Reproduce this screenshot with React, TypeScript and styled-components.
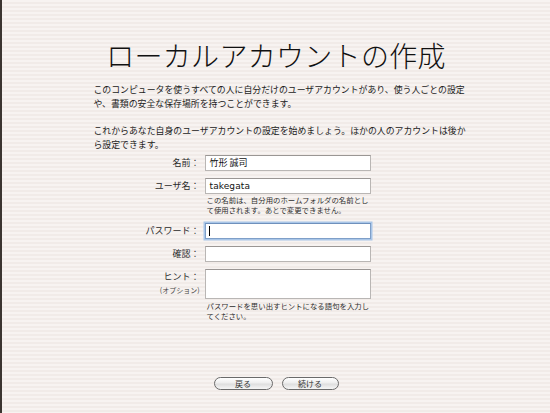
import React from "react";
import styled, { createGlobalStyle } from "styled-components";

const GlobalStyle = createGlobalStyle`
  html, body {
    margin: 0;
    padding: 0;
  }
  body {
    font-family: "Noto Sans CJK JP", "Noto Sans", sans-serif;
    color: #1e1e1e;
  }
`;

const Screen = styled.div`
  width: 550px;
  height: 413px;
  box-sizing: border-box;
  border-left: 2px solid #3b3531;
  background: repeating-linear-gradient(
    to bottom,
    #f7f3f1 0px,
    #f7f3f1 2px,
    #f1ebe8 2px,
    #f1ebe8 4px
  );
  display: flex;
  flex-direction: column;
  align-items: center;
  overflow: hidden;
`;

const Title = styled.h1`
  margin: 38px 0 0;
  font-size: 28px;
  line-height: 34px;
  font-weight: 300;
  letter-spacing: 0.3px;
  color: #111;
`;

const Body = styled.div`
  width: 380px;
  margin-top: 11px;
  margin-left: 14px;
  padding-left: 1px;
`;

const Para = styled.p`
  margin: 0 0 13px;
  font-size: 8.9px;
  line-height: 14px;
  color: #222;
  white-space: nowrap;
`;

const Form = styled.div`
  display: grid;
  grid-template-columns: 111px 166px;
  column-gap: 5px;
  margin-left: -5px;
  margin-top: -10px;
`;

const Label = styled.div<{ $top?: number }>`
  text-align: right;
  font-size: 9px;
  line-height: 16px;
  color: #2a2a2a;
  margin-top: ${(p) => p.$top ?? 0}px;
`;

const Sub = styled.div`
  font-size: 7px;
  line-height: 10px;
  color: #444;
`;

const Field = styled.div<{ $focused?: boolean; $tall?: boolean; $top?: number }>`
  box-sizing: border-box;
  height: ${(p) => (p.$tall ? 30 : 16)}px;
  margin-top: ${(p) => p.$top ?? 0}px;
  background: #fff;
  border: 1px solid ${(p) => (p.$focused ? "#7f9fc8" : "#b9b6b4")};
  border-top-color: ${(p) => (p.$focused ? "#6f90bc" : "#9a9694")};
  box-shadow: ${(p) => (p.$focused ? "0 0 0 1.5px #a9c6e8" : "none")};
  padding: 0 4px;
  font-size: 9px;
  line-height: 14px;
  color: #111;
  display: flex;
  align-items: center;
`;

const Latin = styled.span`
  font-family: "DejaVu Sans", "Liberation Sans", sans-serif;
  font-size: 9px;
  letter-spacing: 0.1px;
`;

const Caret = styled.span`
  display: inline-block;
  width: 1px;
  height: 10px;
  background: #000;
  margin-left: -1px;
`;

const Help = styled.div<{ $top?: number }>`
  font-size: 7.4px;
  line-height: 10px;
  color: #2e2e2e;
  padding-left: 2px;
  margin-top: ${(p) => p.$top ?? 0}px;
  white-space: nowrap;
`;

const Buttons = styled.div`
  display: flex;
  gap: 9px;
  margin-top: 56px;
`;

const PillButton = styled.button<{ $w: number }>`
  box-sizing: border-box;
  width: ${(p) => p.$w}px;
  height: 13px;
  padding: 0;
  border: 1px solid #6a6a6a;
  border-radius: 7px;
  background: linear-gradient(
    to bottom,
    #ffffff 0%,
    #eeeeee 45%,
    #dedede 55%,
    #f6f6f6 100%
  );
  font-family: "Noto Sans CJK JP", sans-serif;
  font-size: 8px;
  line-height: 11px;
  color: #333;
`;

const Empty = styled.div``;

export default function App() {
  return (
    <>
      <GlobalStyle />
      <Screen>
        <Title>ローカルアカウントの作成</Title>
        <Body>
          <Para>
            このコンピュータを使うすべての人に自分だけのユーザアカウントがあり、使う人ごとの設定
            <br />
            や、書類の安全な保存場所を持つことができます。
          </Para>
          <Para>
            これからあなた自身のユーザアカウントの設定を始めましょう。ほかの人のアカウントは後か
            <br />
            ら設定できます。
          </Para>
          <Form>
            <Label>名前：</Label>
            <Field>竹形 誠司</Field>

            <Label $top={7}>ユーザ名：</Label>
            <Field $top={7}>
              <Latin>takegata</Latin>
            </Field>

            <Empty />
            <Help $top={1}>
              この名前は、自分用のホームフォルダの名前とし
              <br />
              て使用されます。あとで変更できません。
            </Help>

            <Label $top={8}>パスワード：</Label>
            <Field $top={8} $focused>
              <Caret />
            </Field>

            <Label $top={7}>確認：</Label>
            <Field $top={7} />

            <Label $top={7}>
              ヒント：
              <Sub>(オプション)</Sub>
            </Label>
            <Field $top={7} $tall />

            <Empty />
            <Help $top={2}>
              パスワードを思い出すヒントになる語句を入力し
              <br />
              てください。
            </Help>
          </Form>
        </Body>
        <Buttons>
          <PillButton $w={59}>戻る</PillButton>
          <PillButton $w={57}>続ける</PillButton>
        </Buttons>
      </Screen>
    </>
  );
}
